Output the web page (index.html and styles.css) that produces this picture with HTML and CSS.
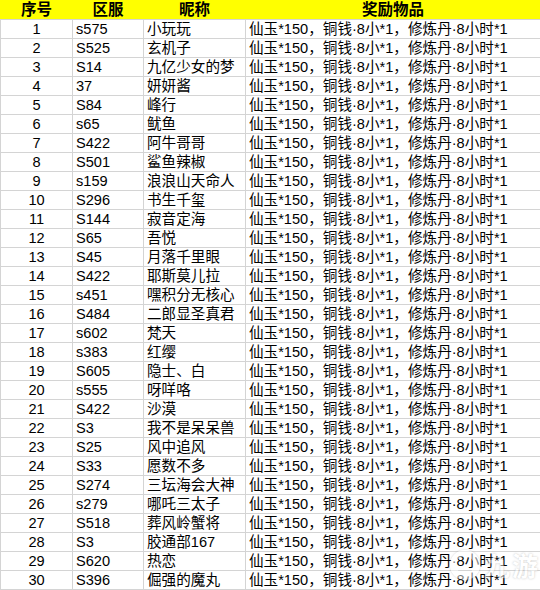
FILE: index.html
```html
<!DOCTYPE html>
<html lang="zh">
<head>
<meta charset="utf-8">
<link rel="stylesheet" href="styles.css">
</head>
<body>
<div class="sheet">
<table class="grid">
<colgroup><col class="c1"><col class="c2"><col class="c3"><col class="c4"></colgroup>
<thead>
<tr><th>序号</th><th>区服</th><th>昵称</th><th>奖励物品</th></tr>
</thead>
<tbody>
<tr><td class="num">1</td><td>s575</td><td>小玩玩</td><td>仙玉*150，铜钱·8小*1，修炼丹·8小时*1</td></tr>
<tr><td class="num">2</td><td>S525</td><td>玄机子</td><td>仙玉*150，铜钱·8小*1，修炼丹·8小时*1</td></tr>
<tr><td class="num">3</td><td>S14</td><td>九亿少女的梦</td><td>仙玉*150，铜钱·8小*1，修炼丹·8小时*1</td></tr>
<tr><td class="num">4</td><td>37</td><td>妍妍酱</td><td>仙玉*150，铜钱·8小*1，修炼丹·8小时*1</td></tr>
<tr><td class="num">5</td><td>S84</td><td>峰行</td><td>仙玉*150，铜钱·8小*1，修炼丹·8小时*1</td></tr>
<tr><td class="num">6</td><td>s65</td><td>鱿鱼</td><td>仙玉*150，铜钱·8小*1，修炼丹·8小时*1</td></tr>
<tr><td class="num">7</td><td>S422</td><td>阿牛哥哥</td><td>仙玉*150，铜钱·8小*1，修炼丹·8小时*1</td></tr>
<tr><td class="num">8</td><td>S501</td><td>鲨鱼辣椒</td><td>仙玉*150，铜钱·8小*1，修炼丹·8小时*1</td></tr>
<tr><td class="num">9</td><td>s159</td><td>浪浪山天命人</td><td>仙玉*150，铜钱·8小*1，修炼丹·8小时*1</td></tr>
<tr><td class="num">10</td><td>S296</td><td>书生千玺</td><td>仙玉*150，铜钱·8小*1，修炼丹·8小时*1</td></tr>
<tr><td class="num">11</td><td>S144</td><td>寂音定海</td><td>仙玉*150，铜钱·8小*1，修炼丹·8小时*1</td></tr>
<tr><td class="num">12</td><td>S65</td><td>吾悦</td><td>仙玉*150，铜钱·8小*1，修炼丹·8小时*1</td></tr>
<tr><td class="num">13</td><td>S45</td><td>月落千里眼</td><td>仙玉*150，铜钱·8小*1，修炼丹·8小时*1</td></tr>
<tr><td class="num">14</td><td>S422</td><td>耶斯莫儿拉</td><td>仙玉*150，铜钱·8小*1，修炼丹·8小时*1</td></tr>
<tr><td class="num">15</td><td>s451</td><td>嘿积分无核心</td><td>仙玉*150，铜钱·8小*1，修炼丹·8小时*1</td></tr>
<tr><td class="num">16</td><td>S484</td><td>二郎显圣真君</td><td>仙玉*150，铜钱·8小*1，修炼丹·8小时*1</td></tr>
<tr><td class="num">17</td><td>s602</td><td>梵天</td><td>仙玉*150，铜钱·8小*1，修炼丹·8小时*1</td></tr>
<tr><td class="num">18</td><td>s383</td><td>红缨</td><td>仙玉*150，铜钱·8小*1，修炼丹·8小时*1</td></tr>
<tr><td class="num">19</td><td>S605</td><td>隐士、白</td><td>仙玉*150，铜钱·8小*1，修炼丹·8小时*1</td></tr>
<tr><td class="num">20</td><td>s555</td><td>呀咩咯</td><td>仙玉*150，铜钱·8小*1，修炼丹·8小时*1</td></tr>
<tr><td class="num">21</td><td>S422</td><td>沙漠</td><td>仙玉*150，铜钱·8小*1，修炼丹·8小时*1</td></tr>
<tr><td class="num">22</td><td>S3</td><td>我不是呆呆兽</td><td>仙玉*150，铜钱·8小*1，修炼丹·8小时*1</td></tr>
<tr><td class="num">23</td><td>S25</td><td>风中追风</td><td>仙玉*150，铜钱·8小*1，修炼丹·8小时*1</td></tr>
<tr><td class="num">24</td><td>S33</td><td>愿数不多</td><td>仙玉*150，铜钱·8小*1，修炼丹·8小时*1</td></tr>
<tr><td class="num">25</td><td>S274</td><td>三坛海会大神</td><td>仙玉*150，铜钱·8小*1，修炼丹·8小时*1</td></tr>
<tr><td class="num">26</td><td>s279</td><td>哪吒三太子</td><td>仙玉*150，铜钱·8小*1，修炼丹·8小时*1</td></tr>
<tr><td class="num">27</td><td>S518</td><td>葬风岭蟹将</td><td>仙玉*150，铜钱·8小*1，修炼丹·8小时*1</td></tr>
<tr><td class="num">28</td><td>S3</td><td>胶通部167</td><td>仙玉*150，铜钱·8小*1，修炼丹·8小时*1</td></tr>
<tr><td class="num">29</td><td>S620</td><td>热恋</td><td>仙玉*150，铜钱·8小*1，修炼丹·8小时*1</td></tr>
<tr><td class="num">30</td><td>S396</td><td>倔强的魔丸</td><td>仙玉*150，铜钱·8小*1，修炼丹·8小时*1</td></tr>
</tbody>
</table>
<div class="watermark"><span class="wm-ring"></span><span class="wm-text">九游</span></div>
</div>
</body>
</html>
```
FILE: styles.css
```css
html, body {
  margin: 0;
  padding: 0;
  background: #ffffff;
}
.sheet {
  position: relative;
  width: 540px;
  height: 590px;
  overflow: hidden;
}
.grid {
  border-collapse: collapse;
  table-layout: fixed;
  width: 540px;
  font-family: "Liberation Sans", "Noto Sans CJK SC", sans-serif;
  font-size: 14.6px;
  color: #000;
}
.c1 { width: 72px; }
.c2 { width: 71px; }
.c3 { width: 102px; }
.c4 { width: 295px; }
.grid th {
  background: #ffff00;
  font-weight: bold;
  font-size: 15.5px;
  text-align: center;
  height: 18px;
  line-height: 18px;
  padding: 0;
  border: 1px solid #ffff00;
  border-bottom: 1px solid #d4d4d4;
  white-space: nowrap;
}
.grid td {
  height: 18px;
  line-height: 18px;
  padding: 0 0 0 3px;
  border: 1px solid #d4d4d4;
  white-space: nowrap;
  overflow: hidden;
}
.grid td.num {
  text-align: center;
  padding: 0;
}
.watermark {
  position: absolute;
  left: 450px;
  top: 550px;
  display: flex;
  align-items: center;
  gap: 4px;
  opacity: 0.5;
}
.wm-ring {
  width: 30px;
  height: 30px;
  border-radius: 50%;
  border: 6px solid #ffffff;
  box-shadow: 0 0 2px #999;
  box-sizing: border-box;
}
.wm-text {
  font-family: "Noto Sans CJK SC", sans-serif;
  font-size: 26px;
  line-height: 30px;
  font-weight: bold;
  color: #ffffff;
  text-shadow: 0 0 2px #888;
  letter-spacing: 2px;
}
```
